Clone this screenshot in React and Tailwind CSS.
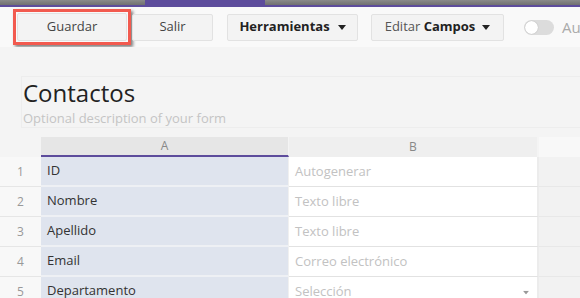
import React from "react";

const Caret = ({ className = "" }) => (
  <svg width="8" height="5" viewBox="0 0 8 5" className={className}>
    <path d="M0 0 L8 0 L4 5 Z" fill="currentColor" />
  </svg>
);

const rows = [
  ["1", "ID", "Autogenerar"],
  ["2", "Nombre", "Texto libre"],
  ["3", "Apellido", "Texto libre"],
  ["4", "Email", "Correo electrónico"],
  ["5", "Departamento", "Selección"],
];

export default function App() {
  return (
    <div
      className="w-[580px] h-[298px] overflow-hidden bg-[#f4f4f4]"
      style={{ fontFamily: '"Open Sans", "Liberation Sans", sans-serif' }}
    >
      {/* top strip */}
      <div className="flex h-[5px]">
        <div className="w-[145px] bg-gradient-to-b from-[#8a8a8a] to-[#707070]" />
        <div className="w-[120px] bg-[#5d4c9c]" />
        <div className="flex-1 bg-gradient-to-b from-[#8a8a8a] to-[#707070]" />
      </div>
      <div className="h-[2px] bg-[#5d4c9c]" />

      {/* toolbar */}
      <div className="h-[40px] bg-[#f9f9f9] flex items-center text-[13px] overflow-hidden whitespace-nowrap">
        <div className="shrink-0 ml-[13px] border-[3px] border-[#f25a4f] p-px shadow-[2px_2px_3px_rgba(0,0,0,0.5)]">
          <div className="w-[110px] h-[28px] bg-[#f3f3f3] border border-[#e2e2e2] rounded-[2px] flex items-center justify-center text-[#444]">
            Guardar
          </div>
        </div>
        <div className="shrink-0 ml-px w-[81px] h-[27px] bg-[#f3f3f3] border border-[#e2e2e2] rounded-[2px] flex items-center justify-center text-[#444]">
          Salir
        </div>
        <div className="shrink-0 ml-[14px] w-[131px] h-[27px] bg-[#f3f3f3] border border-[#e2e2e2] rounded-[2px] flex items-center justify-center gap-[8px] text-[#222] font-bold">
          Herramientas
          <Caret />
        </div>
        <div className="shrink-0 ml-[13px] w-[133px] h-[27px] bg-[#f3f3f3] border border-[#e2e2e2] rounded-[2px] flex items-center justify-center gap-[7px] text-[#555]">
          <span>
            Editar <span className="font-bold text-[#222]">Campos</span>
          </span>
          <Caret className="text-[#222]" />
        </div>
        <div className="shrink-0 ml-[20px] w-[30px] h-[15px] rounded-full bg-[#dcdcdc] flex items-center px-px">
          <div className="w-[13px] h-[13px] rounded-full bg-white shadow-[0_0_1px_rgba(0,0,0,0.3)]" />
        </div>
        <div className="shrink-0 ml-[8px] text-[15px] text-[#aaa]">Autoguardar</div>
      </div>

      {/* title */}
      <div className="ml-[21px] mt-[29px] w-[600px] h-[52px] border border-[#ededed]">
        <div className="pl-px text-[24px] leading-[32px] text-[#222] whitespace-nowrap">Contactos</div>
        <div className="pl-px text-[13px] leading-[18px] text-[#c4c4c4] whitespace-nowrap">
          Optional description of your form
        </div>
      </div>

      {/* grid */}
      <div className="mt-[9px] text-[13px]">
        <div className="grid grid-cols-[41px_248px_250px_1fr] h-[20px]">
          <div className="bg-[#f4f4f4]" />
          <div className="bg-[#e6e6e6] border-b-2 border-[#5d4c9c] border-r border-r-[#f4f4f4] flex items-center justify-center text-[12px] text-[#888]">
            A
          </div>
          <div className="bg-[#efefef] border-r-2 border-r-[#f4f4f4] flex items-center justify-center text-[12px] text-[#888]">
            B
          </div>
          <div className="bg-[#f8f8f8]" />
        </div>
        {rows.map(([n, a, b], i) => (
          <div key={n} className="grid grid-cols-[41px_248px_250px_1fr] h-[30px]">
            <div className="bg-[#f8f8f8] border-b border-[#e6e6e6] flex items-center justify-center text-[12px] text-[#999]">
              {n}
            </div>
            <div className="bg-[#dfe4ee] border-b-2 border-[#eef0f4] border-r border-r-[#f0f0f0] flex items-center pl-[6px] text-[#333]">
              {a}
            </div>
            <div className="relative bg-white border-b border-[#e2e2e2] border-r-2 border-r-[#ececec] flex items-center pl-[6px] text-[#c2c2c2]">
              {b}
              {i === 4 && (
                <Caret className="absolute right-[7px] top-[13px] text-[#999] scale-75" />
              )}
            </div>
            <div className="bg-[#f2f2f2] border-b border-[#e8e8e8]" />
          </div>
        ))}
      </div>
    </div>
  );
}
